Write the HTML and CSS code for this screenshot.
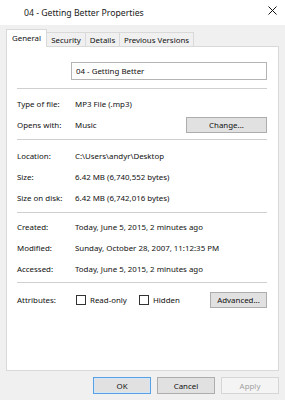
FILE: index.html
```html
<!DOCTYPE html>
<html>
<head>
<meta charset="utf-8">
<link rel="stylesheet" href="styles.css">
</head>
<body>
<div class="window">
  <div class="titlebar">
    <span class="title">04 - Getting Better Properties</span>
    <svg class="close" width="9" height="9" viewBox="0 0 9 9"><path d="M0.5 0.5 L8.5 8.5 M8.5 0.5 L0.5 8.5" stroke="#111" stroke-width="1" fill="none"/></svg>
  </div>
  <div class="body">
    <div class="tabs">
      <div class="tab active tab-general">General</div>
      <div class="tab tab-security">Security</div>
      <div class="tab tab-details">Details</div>
      <div class="tab tab-prev">Previous Versions</div>
    </div>
    <div class="panel">
      <div class="namerow"><div class="textbox">04 - Getting Better</div></div>
      <div class="sep sep1"></div>
      <div class="group g1">
        <div class="row"><span class="label">Type of file:</span><span class="value">MP3 File (.mp3)</span></div>
        <div class="row"><span class="label">Opens with:</span><span class="value grow">Music</span><span class="btn btn-change">Change...</span></div>
      </div>
      <div class="sep"></div>
      <div class="group g2">
        <div class="row"><span class="label">Location:</span><span class="value">C:\Users\andyr\Desktop</span></div>
        <div class="row"><span class="label">Size:</span><span class="value">6.42 MB (6,740,552 bytes)</span></div>
        <div class="row"><span class="label">Size on disk:</span><span class="value">6.42 MB (6,742,016 bytes)</span></div>
      </div>
      <div class="sep"></div>
      <div class="group g3">
        <div class="row"><span class="label">Created:</span><span class="value">Today, June 5, 2015, 2 minutes ago</span></div>
        <div class="row"><span class="label">Modified:</span><span class="value">Sunday, October 28, 2007, 11:12:35 PM</span></div>
        <div class="row"><span class="label">Accessed:</span><span class="value">Today, June 5, 2015, 2 minutes ago</span></div>
      </div>
      <div class="sep"></div>
      <div class="row attr">
        <span class="label">Attributes:</span>
        <span class="check"><span class="box"></span><span>Read-only</span></span>
        <span class="check hidden-check grow"><span class="box"></span><span>Hidden</span></span>
        <span class="btn btn-adv">Advanced...</span>
      </div>
    </div>
    <div class="footer">
      <span class="btn fbtn ok">OK</span>
      <span class="btn fbtn">Cancel</span>
      <span class="btn fbtn disabled">Apply</span>
    </div>
  </div>
</div>
</body>
</html>
```
FILE: styles.css
```css
* { box-sizing: border-box; }
html, body { margin: 0; padding: 0; }
body {
  width: 285px;
  height: 400px;
  overflow: hidden;
  font-family: "Noto Sans", "Liberation Sans", sans-serif;
  font-size: 7.9px;
  color: #111;
  background: #f0f0f0;
}
.window { width: 285px; height: 400px; display: flex; flex-direction: column; }
.titlebar {
  height: 25px;
  background: #ffffff;
  display: flex;
  align-items: center;
  padding: 0 8px 0 24px;
}
.title { font-size: 8.7px; color: #1a1a1a; flex: 1; }
.close { align-self: flex-start; margin-top: 6px; }
.body { flex: 1; background: #f0f0f0; padding: 4px 6px 0 6px; display: flex; flex-direction: column; }
.tabs { display: flex; align-items: flex-end; height: 17px; }
.tab {
  height: 14px;
  border: 1px solid #d9d9d9;
  border-bottom: none;
  background: #f0f0f0;
  display: flex;
  align-items: center;
  justify-content: center;
  margin-left: -1px;
  padding-top: 1px;
  white-space: nowrap;
}
.tab.active {
  height: 18px;
  background: #ffffff;
  margin-bottom: -1px;
  margin-left: 0;
  position: relative;
  z-index: 1;
  padding-top: 0;
  padding-bottom: 2px;
}
.tab-general { width: 41px; }
.tab-security { width: 40px; }
.tab-details { width: 35px; }
.tab-prev { width: 75px; }
.panel {
  height: 325px;
  background: #ffffff;
  border: 1px solid #d9d9d9;
  padding: 15px 11px 0 10px;
  display: flex;
  flex-direction: column;
}
.namerow { height: 18px; display: flex; padding-left: 54px; }
.textbox {
  flex: 1;
  border: 1px solid #b4b4b4;
  padding-left: 4px;
  display: flex;
  align-items: center;
}
.sep { height: 1px; background: #cfcfcf; margin: 4px 0 4px 0; }
.sep1 { margin-top: 8px; }
.g2 { margin-top: 1px; }
.g3 { margin-top: -1px; margin-bottom: -1px; }
.row { height: 21px; display: flex; align-items: center; }
.label { width: 58px; flex: none; }
.value { white-space: nowrap; }
.grow { flex: 1; }
.btn {
  display: flex;
  align-items: center;
  justify-content: center;
  height: 16px;
  background: #e1e1e1;
  border: 1px solid #adadad;
}
.btn-change { width: 81px; }
.btn-adv { width: 57px; }
.attr { margin-top: 2px; }
.check { display: flex; align-items: center; }
.box { width: 10px; height: 10px; border: 1px solid #333; background: #fff; margin: 0 4px 0 1px; }
.hidden-check { margin-left: 11px; }
.footer { display: flex; justify-content: flex-end; gap: 6px; padding-top: 6px; }
.fbtn { width: 58px; height: 17px; }
.ok { border: 1px solid #5b9fe3; box-shadow: inset 0 0 0 1px #d4e7f8; }
.disabled { background: #f4f4f4; border-color: #d6d6d6; color: #a2a2a2; }
```
